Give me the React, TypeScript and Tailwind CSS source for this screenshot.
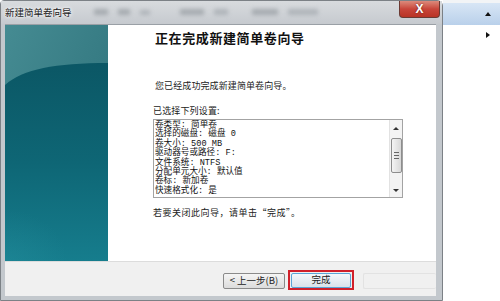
import React from "react";

function TealArt() {
  return (
    <svg width="103" height="236" viewBox="0 0 103 236" className="block">
      <defs>
        <linearGradient id="topg" x1="0" y1="0" x2="1" y2="1">
          <stop offset="0" stopColor="#458b92" />
          <stop offset="1" stopColor="#2b6f78" />
        </linearGradient>
        <linearGradient id="darkg" x1="0" y1="0" x2="0" y2="1">
          <stop offset="0" stopColor="#0b5765" />
          <stop offset="0.5" stopColor="#0e6675" />
          <stop offset="1" stopColor="#167d8d" />
        </linearGradient>
        <radialGradient id="glow" cx="0" cy="1" r="0.6">
          <stop offset="0" stopColor="#2a95a3" stopOpacity="0.3" />
          <stop offset="1" stopColor="#2a95a3" stopOpacity="0" />
        </radialGradient>
      </defs>
      <rect x="0" y="0" width="103" height="236" fill="url(#topg)" />
      <path d="M0,60 C18,44 50,38 103,38 L103,236 L0,236 Z" fill="url(#darkg)" />
      <rect x="0" y="150" width="103" height="86" fill="url(#glow)" />
    </svg>
  );
}

export default function App() {
  return (
    <div
      lang="zh-CN"
      className="w-[500px] h-[301px] flex bg-white overflow-hidden font-['Noto_Sans_CJK_SC',sans-serif] text-[#1a1a1a]"
    >
      {/* Window */}
      <div className="w-[443px] h-[301px] flex flex-col bg-[#c3c8cd] border border-[#7c8186] rounded-tr-[6px] rounded-tl-[4px]">
        {/* Title bar */}
        <div className="h-[23px] flex items-start bg-gradient-to-b from-[#d8dbde] to-[#c6cacf]">
          <div className="pl-[4px] pt-[5px] text-[9.5px] leading-[12px] text-[#202020] [text-shadow:0_0_5px_#fff,0_0_3px_#fff] whitespace-nowrap">
            新建简单卷向导
          </div>
          <div className="flex items-center gap-[10px] pl-[22px] pt-[8px] opacity-60">
            <span className="block w-[14px] h-[6px] bg-[#8a9096] blur-[2px]" />
            <span className="block w-[12px] h-[6px] bg-[#8a9096] blur-[2px]" />
            <span className="block w-[10px] h-[5px] bg-[#9aa0a6] blur-[2px]" />
            <span className="block w-[24px] h-[6px] bg-[#8a9096] blur-[2px] ml-[20px]" />
            <span className="block w-[14px] h-[6px] bg-[#9aa0a6] blur-[2px]" />
            <span className="block w-[26px] h-[6px] bg-[#8a9096] blur-[2px] ml-[14px]" />
            <span className="block w-[30px] h-[6px] bg-[#9aa0a6] blur-[2px]" />
          </div>
          <div className="flex-1" />
          <div className="mr-[2px] w-[41px] h-[17px] rounded-b-[4px] border border-t-0 border-[#6b3a33] bg-gradient-to-b from-[#dc8a7c] via-[#c8453a] to-[#b93324] flex items-center justify-center">
            <span className="text-white text-[12px] font-bold leading-none font-['Liberation_Sans',sans-serif] [text-shadow:0_0_2px_#5a1a10]">
              X
            </span>
          </div>
        </div>

        {/* Client area */}
        <div className="flex-1 flex flex-col ml-[4px] mr-[6px] mb-[4px] border-t border-[#9aa0a6]">
          <div className="h-[236px] flex">
            <div className="w-[103px] h-[236px]">
              <TealArt />
            </div>
            <div className="flex-1 bg-white flex flex-col pl-[45px]">
              <div className="mt-[5px] pl-[2px] text-[13px] leading-[16px] font-bold tracking-[0.6px] text-[#111]">
                正在完成新建简单卷向导
              </div>
              <div className="mt-[34px] pl-[2px] text-[9px] leading-[12px] tracking-[0.1px] text-[#222]">
                您已经成功完成新建简单卷向导。
              </div>
              <div className="mt-[13px] text-[9px] leading-[12px] tracking-[0.15px] text-[#222]">
                已选择下列设置:
              </div>
              <div className="mt-[2px] w-[250px] h-[79px] border border-[#a3a3a3] flex bg-white">
                <div className="flex-1 overflow-hidden pl-[1px] pt-[1px] font-['Liberation_Mono','Noto_Sans_CJK_SC',monospace] text-[8.6px] leading-[9.4px] text-[#111] whitespace-nowrap">
                  <div className="h-[9.4px]">卷类型: 简单卷</div>
                  <div className="h-[9.4px]">选择的磁盘: 磁盘 0</div>
                  <div className="h-[9.4px]">卷大小: 500 MB</div>
                  <div className="h-[9.4px]">驱动器号或路径: F:</div>
                  <div className="h-[9.4px]">文件系统: NTFS</div>
                  <div className="h-[9.4px]">分配单元大小: 默认值</div>
                  <div className="h-[9.4px]">卷标: 新加卷</div>
                  <div className="h-[9.4px]">快速格式化: 是</div>
                </div>
                <div className="w-[13px] bg-[#f3f3f3] border-l border-[#e2e2e2] flex flex-col items-center">
                  <div className="h-[16px] flex items-center justify-center">
                    <div className="w-0 h-0 border-l-[3px] border-r-[3px] border-b-[3px] border-l-transparent border-r-transparent border-b-[#333]" />
                  </div>
                  <div className="mt-[2px] w-[11px] h-[35px] rounded-[2px] border border-[#8d8d8d] bg-gradient-to-r from-[#f4f4f4] to-[#d8d8d8] flex flex-col items-center justify-center gap-[2px]">
                    <span className="block w-[5px] h-[1px] bg-[#666]" />
                    <span className="block w-[5px] h-[1px] bg-[#666]" />
                    <span className="block w-[5px] h-[1px] bg-[#666]" />
                  </div>
                  <div className="flex-1" />
                  <div className="h-[14px] flex items-center justify-center">
                    <div className="w-0 h-0 border-l-[3px] border-r-[3px] border-t-[3px] border-l-transparent border-r-transparent border-t-[#333]" />
                  </div>
                </div>
              </div>
              <div className="mt-[9px] text-[9px] leading-[12px] tracking-[0.5px] text-[#222]">
                若要关闭此向导，请单击“完成”。
              </div>
            </div>
          </div>

          {/* Bottom bar */}
          <div className="flex-1 bg-[#f0f0f0] border-t border-[#dcdcdc] flex items-start justify-end pt-[8px]">
            <div className="mt-[3px] w-[62px] h-[16px] rounded-[2px] border border-[#8a8a8a] bg-gradient-to-b from-[#f5f5f5] to-[#dcdcdc] flex items-center justify-center text-[9.5px] leading-none text-[#222] whitespace-nowrap">
              &lt; 上一步(B)
            </div>
            <div className="ml-[3px] w-[66px] h-[20px] border-2 border-[#d0202a] flex items-center justify-center">
              <div className="w-[60px] h-[15px] rounded-[2px] border border-[#5aa6d6] bg-gradient-to-b from-[#f4f8fb] to-[#d9e3ea] flex items-center justify-center text-[9.5px] leading-none text-[#222]">
                完成
              </div>
            </div>
            <div className="ml-[9px] mt-[3px] w-[73px] h-[16px] rounded-[2px] border border-[#e2e2e2] border-r-0" />
          </div>
        </div>
      </div>

      {/* Right side background */}
      <div className="flex-1 flex flex-col bg-white">
        <div className="h-[3px] bg-[#f2f4f6]" />
        <div className="h-[22px] bg-gradient-to-b from-[#d8e6f5] to-[#b9d0ea] flex items-center justify-end pr-[9px]">
          <div className="w-0 h-0 border-l-[3.5px] border-r-[3.5px] border-b-[4px] border-l-transparent border-r-transparent border-b-[#111]" />
        </div>
        <div className="h-[20px] flex items-center justify-end pr-[10px]">
          <div className="w-0 h-0 border-t-[3.5px] border-b-[3.5px] border-l-[4px] border-t-transparent border-b-transparent border-l-[#111]" />
        </div>
      </div>
    </div>
  );
}
